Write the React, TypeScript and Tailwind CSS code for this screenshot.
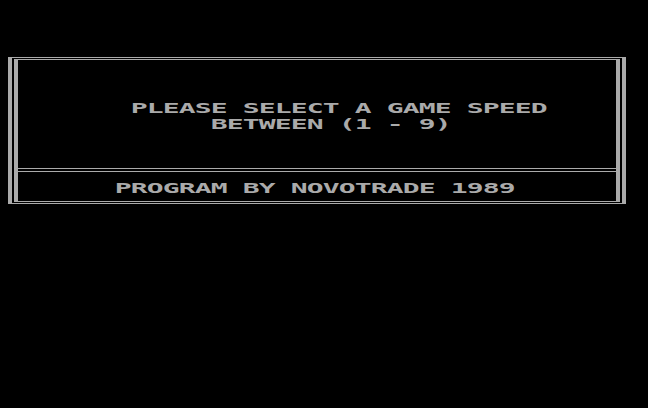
import React from "react";

// Each character sits in a fixed 16px cell, stretched sideways like a
// double-width text-mode glyph.
function BlockText({ text }: { text: string }) {
  return (
    <div className="flex h-4 leading-4">
      {Array.from(text).map((ch, i) => (
        <span key={i} className="inline-flex w-4 justify-center">
          <span className="inline-block [transform:scaleX(2)]">{ch === " " ? "\u00a0" : ch}</span>
        </span>
      ))}
    </div>
  );
}

export default function App() {
  return (
    <div
      className="h-[408px] w-[648px] overflow-hidden bg-black pl-[8px] pt-[57px] text-[14px] font-bold text-[#aaaaaa]"
      style={{ fontFamily: '"DejaVu Sans Mono", monospace' }}
    >
      {/* outer frame */}
      <div className="w-[618px] border-x-4 border-y border-[#aaaaaa] px-[2px] py-[1px]">
        {/* inner frame */}
        <div className="border-x-4 border-y border-[#aaaaaa]">
          <div className="h-[108px] pt-[40px]">
            <div className="pl-[113px]">
              <BlockText text="PLEASE SELECT A GAME SPEED" />
            </div>
            <div className="pl-[193px]">
              <BlockText text="BETWEEN (1 - 9)" />
            </div>
          </div>
          <div className="h-[4px] border-y border-[#aaaaaa]" />
          <div className="h-[29px] pl-[97px] pt-[8px]">
            <BlockText text="PROGRAM BY NOVOTRADE 1989" />
          </div>
        </div>
      </div>
    </div>
  );
}
